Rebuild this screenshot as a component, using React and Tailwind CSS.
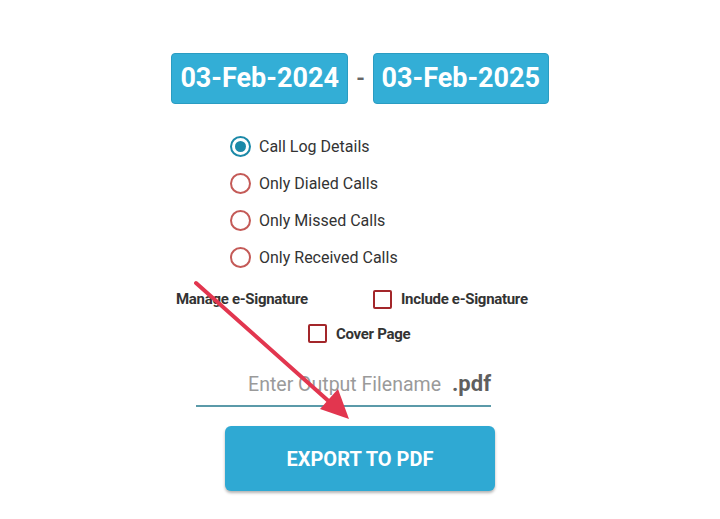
import React, { useState } from 'react';

const options = ['Call Log Details', 'Only Dialed Calls', 'Only Missed Calls', 'Only Received Calls'];

const Radio = ({ checked, label, onClick }) => (
    <button type="button" onClick={onClick} className="flex items-center gap-[8px] h-[37px]">
        <span
            className={`w-[21px] h-[21px] rounded-full border-2 flex items-center justify-center ${
                checked ? 'border-[#1b89a8]' : 'border-[#c45a57]'
            }`}
        >
            {checked && <span className="w-[11px] h-[11px] rounded-full bg-[#1b89a8]" />}
        </span>
        <span className="text-[16px] text-[#333333]">{label}</span>
    </button>
);

const Checkbox = ({ checked, label, onClick }) => (
    <button type="button" onClick={onClick} className="flex items-center gap-[9px]">
        <span className="w-[19px] h-[19px] border-2 border-[#a3262a] rounded-[2px] flex items-center justify-center text-[#a3262a] text-[12px]">
            {checked ? '✓' : ''}
        </span>
        <span className="text-[15px] font-bold text-[#333333] tracking-[-0.3px]">{label}</span>
    </button>
);

const App = () => {
    const [selected, setSelected] = useState(0);
    const [sign, setSign] = useState(false);
    const [cover, setCover] = useState(false);
    const [filename, setFilename] = useState('');

    return (
        <div className="relative w-[720px] h-[519px] bg-white font-['Roboto','Noto_Sans',sans-serif] overflow-hidden">
            {/* Date range */}
            <div className="flex items-center justify-center gap-[8px] pt-[53px]">
                <div className="w-[177px] h-[51px] rounded-[4px] bg-[#33aed6] border border-[#2a9cc2] flex items-center justify-center text-white text-[27px] font-bold">
                    03-Feb-2024
                </div>
                <span className="text-[#666] text-[22px] font-bold">-</span>
                <div className="w-[176px] h-[51px] rounded-[4px] bg-[#33aed6] border border-[#2a9cc2] flex items-center justify-center text-white text-[27px] font-bold">
                    03-Feb-2025
                </div>
            </div>

            {/* Report type */}
            <div className="flex flex-col pl-[230px] mt-[24px]">
                {options.map((opt, i) => (
                    <Radio key={opt} label={opt} checked={selected === i} onClick={() => setSelected(i)} />
                ))}
            </div>

            {/* Signature options */}
            <div className="flex items-center mt-[12px] pl-[176px]">
                <span className="text-[15px] font-bold text-[#333333] tracking-[-0.3px] w-[197px]">Manage e-Signature</span>
                <Checkbox label="Include e-Signature" checked={sign} onClick={() => setSign(!sign)} />
            </div>
            <div className="flex mt-[12px] pl-[308px]">
                <Checkbox label="Cover Page" checked={cover} onClick={() => setCover(!cover)} />
            </div>

            {/* Filename */}
            <div className="flex items-end mt-[24px] ml-[196px] w-[295px] border-b-2 border-[#5b9aa9] pb-[6px]">
                <input
                    value={filename}
                    onChange={(e) => setFilename(e.target.value)}
                    placeholder="Enter Output Filename"
                    className="flex-1 min-w-0 text-right text-[19.5px] text-[#555] placeholder:text-[#9a9a9a] outline-none bg-transparent pr-[11px]"
                />
                <span className="text-[22px] font-bold text-[#5f5f5f] leading-[30px]">.pdf</span>
            </div>

            {/* Export */}
            <div className="flex mt-[19px] pl-[225px]">
                <button className="w-[270px] h-[65px] rounded-[6px] bg-[#2fa9d3] shadow-[0_2px_3px_rgba(0,0,0,0.3)] text-white text-[20px] font-bold">
                    EXPORT TO PDF
                </button>
            </div>

            {/* Annotation arrow */}
            <svg className="absolute left-0 top-0 pointer-events-none" width="720" height="519">
                <line x1="196" y1="283" x2="333" y2="405" stroke="#e2364f" strokeWidth="4" strokeLinecap="round" />
                <polygon points="349,419 320,409 338,389" fill="#e2364f" />
            </svg>
        </div>
    );
};

export default App;
